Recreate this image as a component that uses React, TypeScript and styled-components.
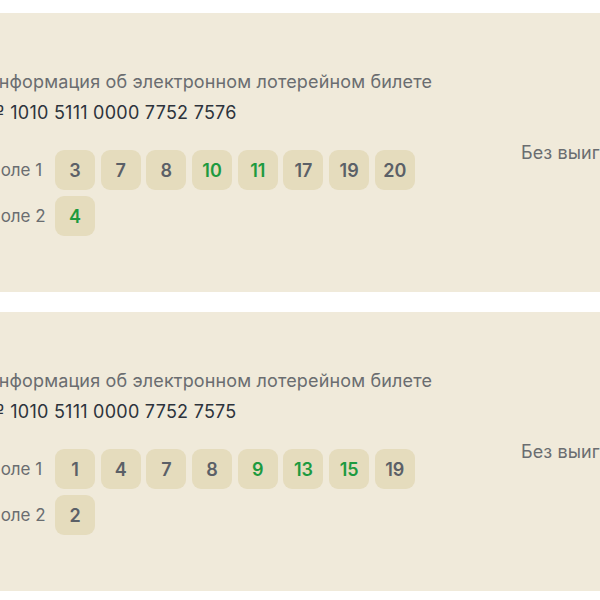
import * as React from "react";
import styled, { createGlobalStyle } from "styled-components";

interface Ball {
  value: number;
  win?: boolean;
}

interface Ticket {
  number: string;
  field1: Array<Ball>;
  field2: Array<Ball>;
  status: string;
}

const tickets: Array<Ticket> = [
  {
    number: "1010 5111 0000 7752 7576",
    field1: [
      { value: 3 },
      { value: 7 },
      { value: 8 },
      { value: 10, win: true },
      { value: 11, win: true },
      { value: 17 },
      { value: 19 },
      { value: 20 },
    ],
    field2: [{ value: 4, win: true }],
    status: "Без выигрыша",
  },
  {
    number: "1010 5111 0000 7752 7575",
    field1: [
      { value: 1 },
      { value: 4 },
      { value: 7 },
      { value: 8 },
      { value: 9, win: true },
      { value: 13, win: true },
      { value: 15, win: true },
      { value: 19 },
    ],
    field2: [{ value: 2 }],
    status: "Без выигрыша",
  },
];

const GlobalStyle = createGlobalStyle`
  body {
    margin: 0;
    background: #ffffff;
    font-family: Inter, "Noto Sans", sans-serif;
    overflow: hidden;
  }
`;

const Page = styled.div`
  display: flex;
  flex-direction: column;
  gap: 20px;
  padding-top: 13px;
  margin-left: -52px;
  width: 720px;
`;

const Card = styled.div`
  background: #f0eada;
  padding: 57px 40px 0 37px;
  height: 279px;
  box-sizing: border-box;
`;

const Title = styled.div`
  font-size: 18px;
  letter-spacing: 0.15px;
  line-height: 24px;
  color: #6a6d70;
`;

const TicketNumber = styled.div`
  font-size: 18px;
  letter-spacing: 0.25px;
  line-height: 24px;
  color: #2d333c;
  margin-top: 7px;
`;

const Body = styled.div`
  display: grid;
  grid-template-columns: 533px 1fr;
  margin: 25px 0 0 3px;
`;

const Fields = styled.div`
  display: flex;
  flex-direction: column;
  gap: 6px;
`;

const FieldRow = styled.div`
  display: flex;
  align-items: center;
`;

const FieldLabel = styled.div`
  width: 67px;
  font-size: 17px;
  color: #6a6d70;
`;

const Balls = styled.div`
  display: flex;
  gap: 5.7px;
`;

const BallBox = styled.div<{ $win?: boolean }>`
  width: 40px;
  height: 40px;
  border-radius: 9px;
  background: #e5dcbd;
  display: flex;
  align-items: center;
  justify-content: center;
  font-size: 18px;
  font-weight: 600;
  color: ${(p) => (p.$win ? "#1d9a3f" : "#5b6067")};
`;

const Status = styled.div`
  font-size: 18px;
  letter-spacing: 0.1px;
  line-height: 20px;
  color: #6a6d70;
  margin-top: -7px;
  white-space: nowrap;
`;

const Field = (props: { label: string; balls: Array<Ball> }) => (
  <FieldRow>
    <FieldLabel>{props.label}</FieldLabel>
    <Balls>
      {props.balls.map((b, i) => (
        <BallBox key={i} $win={b.win}>
          {b.value}
        </BallBox>
      ))}
    </Balls>
  </FieldRow>
);

const TicketCard = (props: Ticket) => (
  <Card>
    <Title>Информация об электронном лотерейном билете</Title>
    <TicketNumber>№ {props.number}</TicketNumber>
    <Body>
      <Fields>
        <Field label="Поле 1" balls={props.field1} />
        <Field label="Поле 2" balls={props.field2} />
      </Fields>
      <Status>{props.status}</Status>
    </Body>
  </Card>
);

export default function App() {
  return (
    <>
      <GlobalStyle />
      <Page>
        {tickets.map((t) => (
          <TicketCard key={t.number} {...t} />
        ))}
      </Page>
    </>
  );
}
